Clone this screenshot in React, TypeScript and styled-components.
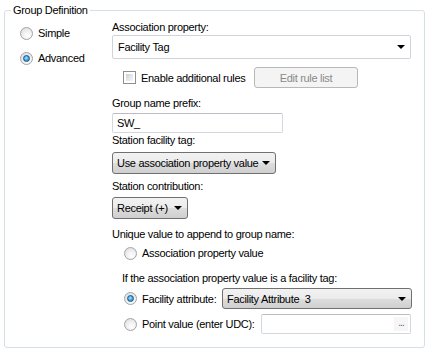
import React from 'react';
import styled, { createGlobalStyle } from 'styled-components';

const GlobalStyle = createGlobalStyle`
  html, body {
    margin: 0;
    padding: 0;
    background: #fff;
  }
  body {
    font-family: "Liberation Sans", Arial, sans-serif;
    font-size: 11px;
    letter-spacing: -0.3px;
    color: #000;
  }
`;

const GroupBox = styled.fieldset`
  box-sizing: border-box;
  width: 421px;
  margin: 4px 0 0 4px;
  padding: 0;
  border: 1px solid #d5dfe5;
  border-radius: 3px;
`;

const Legend = styled.legend`
  margin-left: 6px;
  padding: 0 2px;
  line-height: 13px;
`;

const Layout = styled.div`
  display: grid;
  grid-template-columns: 107px 299px;
  padding-bottom: 13px;
`;

const ModeColumn = styled.div`
  display: flex;
  flex-direction: column;
  gap: 9px;
  padding: 8px 0 0 15px;
`;

const SettingsColumn = styled.div`
  display: flex;
  flex-direction: column;
  padding-top: 4px;
`;

const Label = styled.div<{ $top?: number; $indent?: number }>`
  line-height: 13px;
  margin-top: ${p => p.$top ?? 0}px;
  padding-left: ${p => p.$indent ?? 0}px;
  white-space: nowrap;
`;

const OptionRow = styled.label<{ $top?: number; $indent?: number; $height?: number; $width?: number }>`
  display: flex;
  align-items: center;
  gap: 5px;
  flex: none;
  width: ${p => (p.$width ? `${p.$width}px` : 'auto')};
  height: ${p => p.$height ?? 16}px;
  margin-top: ${p => p.$top ?? 0}px;
  padding-left: ${p => p.$indent ?? 0}px;
  white-space: nowrap;
`;

const RadioDot = styled.span<{ $checked?: boolean }>`
  position: relative;
  box-sizing: border-box;
  flex: none;
  width: 13px;
  height: 13px;
  border-radius: 50%;
  border: 1px solid #a2a3a3;
  background: radial-gradient(circle at 60% 70%, #ffffff 0%, #f2f2f2 40%, #d8d8d8 100%);

  &::after {
    content: '';
    display: ${p => (p.$checked ? 'block' : 'none')};
    position: absolute;
    left: 2px;
    top: 2px;
    width: 7px;
    height: 7px;
    box-sizing: border-box;
    border-radius: 50%;
    border: 1px solid #1c5180;
    background: radial-gradient(circle at 45% 40%, #a8e4ff 0%, #4bb0ef 45%, #1a6bb5 100%);
  }
`;

const CheckBox = styled.span`
  box-sizing: border-box;
  flex: none;
  width: 13px;
  height: 13px;
  border: 1px solid #8e8f8f;
  background: #fff;
  position: relative;

  &::after {
    content: '';
    position: absolute;
    inset: 2px;
    background: linear-gradient(135deg, #cbcfd5 0%, #e4e6e9 50%, #f5f5f5 100%);
  }
`;

const ComboBox = styled.div<{ $width: number; $height: number; $top?: number; $button?: boolean }>`
  box-sizing: border-box;
  display: flex;
  align-items: center;
  justify-content: space-between;
  flex: none;
  width: ${p => p.$width}px;
  height: ${p => p.$height}px;
  margin-top: ${p => p.$top ?? 0}px;
  padding: 0 5px 0 ${p => (p.$button ? 4 : 5)}px;
  border: 1px solid ${p => (p.$button ? '#707070' : '#cfd4da')};
  border-radius: ${p => (p.$button ? 3 : 2)}px;
  background: ${p =>
    p.$button ? 'linear-gradient(to bottom, #f2f2f2 0%, #ebebeb 50%, #dddddd 51%, #cfcfcf 100%)' : '#fff'};
  white-space: nowrap;
`;

const Arrow = styled.span`
  flex: none;
  width: 0;
  height: 0;
  border-left: 4px solid transparent;
  border-right: 4px solid transparent;
  border-top: 4px solid #000;
`;

const TextBox = styled.div<{ $width: number; $top?: number }>`
  box-sizing: border-box;
  display: flex;
  align-items: center;
  justify-content: space-between;
  width: ${p => p.$width}px;
  height: 20px;
  margin-top: ${p => p.$top ?? 0}px;
  padding: 0 2px 0 4px;
  border: 1px solid #d3d8de;
  border-top-color: #b9bec5;
  border-radius: 2px;
  background: #fff;
`;

const EllipsisButton = styled.span`
  width: 14px;
  height: 14px;
  line-height: 12px;
  text-align: center;
  font-size: 10px;
  letter-spacing: -1px;
  color: #7a4e8a;
  background: #f6f6f6;
`;

const RulesRow = styled.div`
  display: flex;
  align-items: center;
  margin-top: 8px;
  padding-left: 11px;
`;

const DisabledButton = styled.div`
  box-sizing: border-box;
  width: 104px;
  height: 21px;
  display: flex;
  align-items: center;
  justify-content: center;
  border: 1px solid #b8b8b8;
  border-radius: 3px;
  background: #f4f4f4;
  color: #8a8a8a;
`;

const FieldLabel = styled.span<{ $width: number }>`
  width: ${p => p.$width}px;
  flex: none;
`;

export default function App() {
  return (
    <>
      <GlobalStyle />
      <GroupBox>
        <Legend>Group Definition</Legend>
        <Layout>
          <ModeColumn>
            <OptionRow>
              <RadioDot />
              Simple
            </OptionRow>
            <OptionRow>
              <RadioDot $checked />
              Advanced
            </OptionRow>
          </ModeColumn>

          <SettingsColumn>
            <Label>Association property:</Label>
            <ComboBox $width={299} $height={24} $top={1}>
              Facility Tag
              <Arrow />
            </ComboBox>

            <RulesRow>
              <OptionRow $width={131}>
                <CheckBox />
                Enable additional rules
              </OptionRow>
              <DisabledButton>Edit rule list</DisabledButton>
            </RulesRow>

            <Label $top={9}>Group name prefix:</Label>
            <TextBox $width={171} $top={3}>SW_</TextBox>

            <Label $top={1}>Station facility tag:</Label>
            <ComboBox $button $width={164} $height={22} $top={5}>
              Use association property value
              <Arrow />
            </ComboBox>

            <Label $top={6}>Station contribution:</Label>
            <ComboBox $button $width={76} $height={22} $top={4}>
              Receipt (+)
              <Arrow />
            </ComboBox>

            <Label $top={9}>Unique value to append to group name:</Label>
            <OptionRow $top={4} $indent={12}>
              <RadioDot />
              Association property value
            </OptionRow>

            <Label $top={11} $indent={10}>If the association property value is a facility tag:</Label>
            <OptionRow $top={3} $indent={12} $height={21}>
              <RadioDot $checked />
              <FieldLabel $width={75}>Facility attribute:</FieldLabel>
              <ComboBox $button $width={190} $height={21}>
                Facility Attribute&nbsp; 3
                <Arrow />
              </ComboBox>
            </OptionRow>
            <OptionRow $top={5} $indent={12} $height={20}>
              <RadioDot />
              <FieldLabel $width={114}>Point value (enter UDC):</FieldLabel>
              <TextBox $width={151}>
                <span />
                <EllipsisButton>...</EllipsisButton>
              </TextBox>
            </OptionRow>
          </SettingsColumn>
        </Layout>
      </GroupBox>
    </>
  );
}
